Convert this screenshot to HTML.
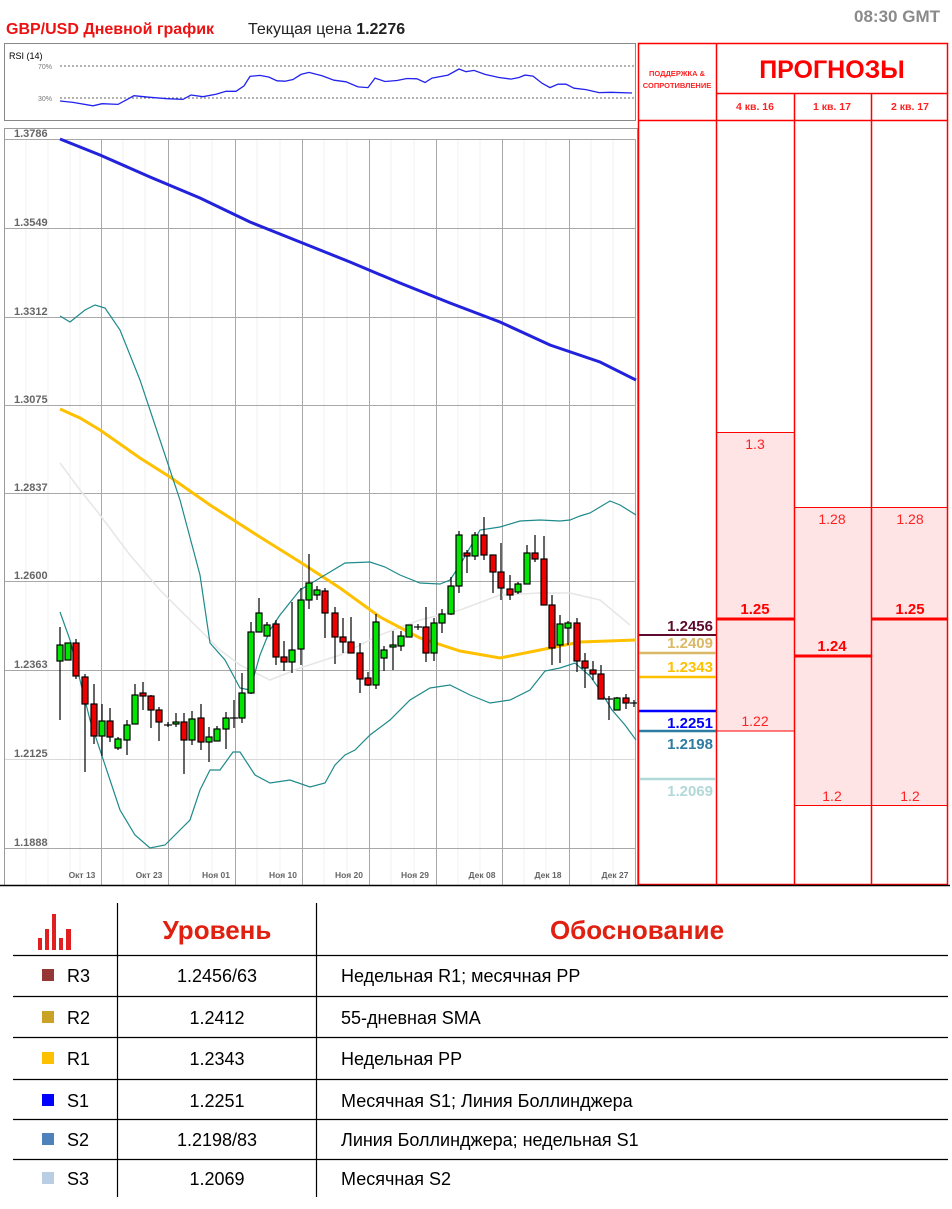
<!DOCTYPE html>
<html><head><meta charset="utf-8"><style>
html,body{margin:0;padding:0;background:#fff;width:952px;height:1209px;overflow:hidden}
svg{display:block;font-family:"Liberation Sans","DejaVu Sans",sans-serif}
</style></head><body>
<svg width="952" height="1209" viewBox="0 0 952 1209" xmlns="http://www.w3.org/2000/svg">
<!-- header -->
<text x="6" y="34" font-size="16" font-weight="bold" fill="#ee1111">GBP/USD Дневной график</text>
<text x="248" y="34" font-size="16" fill="#222">Текущая цена <tspan font-weight="bold">1.2276</tspan></text>
<text x="940" y="22" font-size="17" font-weight="bold" fill="#8a8a8a" text-anchor="end">08:30 GMT</text>

<!-- RSI -->
<rect x="4.5" y="43.5" width="631" height="77" fill="#fff" stroke="#888"/>
<text x="9" y="59" font-size="9" fill="#000">RSI (14)</text>
<text x="52" y="69" font-size="7" fill="#777" text-anchor="end">70%</text>
<text x="52" y="101" font-size="7" fill="#777" text-anchor="end">30%</text>
<line x1="60" y1="66" x2="634" y2="66" stroke="#666" stroke-dasharray="2,2"/>
<line x1="60" y1="98" x2="634" y2="98" stroke="#666" stroke-dasharray="2,2"/>
<polyline fill="none" stroke="#2222ee" stroke-width="1.3" points="60,101 73,102.4 93,105.8 102,103.7 118,104.4 134,95.7 150,97.3 167,98.7 183,99.4 191,95 203,96.7 216,94.3 226,91.3 236,91.3 244,85.9 250,76.4 260,75.4 269,77.1 277,80.8 285,81.2 293,79.5 301,74.4 309,72.4 322,75.8 334,80.2 346,81.8 358,86.9 368,87.6 375,78.1 385,81.5 397,80.5 407,78.5 417,78.8 425,82.5 432,78.1 448,75.1 459,69 466,71.7 474,70.4 485,74.4 499,77.5 511,79.1 519,77.5 525,75.1 533,76.1 542,83.2 550,87.6 558,84.2 566,84.2 574,88.2 586,89.6 599,92.6 611,92.3 632,93"/>

<!-- main chart frame -->
<rect x="4.5" y="128.5" width="633" height="757" fill="#fff" stroke="#999"/>
<g stroke="#f0f0f0" stroke-width="1">
<line x1="26" y1="139" x2="26" y2="885"/><line x1="48" y1="139" x2="48" y2="885"/><line x1="70" y1="139" x2="70" y2="885"/><line x1="80" y1="139" x2="80" y2="885"/><line x1="123" y1="139" x2="123" y2="885"/><line x1="145" y1="139" x2="145" y2="885"/><line x1="190" y1="139" x2="190" y2="885"/><line x1="212" y1="139" x2="212" y2="885"/><line x1="257" y1="139" x2="257" y2="885"/><line x1="280" y1="139" x2="280" y2="885"/><line x1="324" y1="139" x2="324" y2="885"/><line x1="347" y1="139" x2="347" y2="885"/><line x1="391" y1="139" x2="391" y2="885"/><line x1="414" y1="139" x2="414" y2="885"/><line x1="458" y1="139" x2="458" y2="885"/><line x1="480" y1="139" x2="480" y2="885"/><line x1="524" y1="139" x2="524" y2="885"/><line x1="546" y1="139" x2="546" y2="885"/><line x1="591" y1="139" x2="591" y2="885"/><line x1="613" y1="139" x2="613" y2="885"/>
</g>
<g stroke="#a8a8a8" stroke-width="1">
<line x1="5" y1="139.5" x2="636" y2="139.5"/><line x1="5" y1="228.5" x2="636" y2="228.5"/><line x1="5" y1="317.5" x2="636" y2="317.5"/><line x1="5" y1="405.5" x2="636" y2="405.5"/><line x1="5" y1="493.5" x2="636" y2="493.5"/><line x1="5" y1="581.5" x2="636" y2="581.5"/><line x1="5" y1="670.5" x2="636" y2="670.5"/><line x1="5" y1="759.5" x2="636" y2="759.5" stroke="#d8d8d8"/><line x1="5" y1="848.5" x2="636" y2="848.5"/>
<line x1="101.5" y1="139" x2="101.5" y2="885"/><line x1="168.5" y1="139" x2="168.5" y2="885"/><line x1="235.5" y1="139" x2="235.5" y2="885"/><line x1="302.5" y1="139" x2="302.5" y2="885"/><line x1="369.5" y1="139" x2="369.5" y2="885"/><line x1="436.5" y1="139" x2="436.5" y2="885"/><line x1="502.5" y1="139" x2="502.5" y2="885"/><line x1="569.5" y1="139" x2="569.5" y2="885"/><line x1="635.5" y1="139" x2="635.5" y2="885"/>
</g>
<g font-size="11" font-weight="bold" fill="#666">
<text x="14" y="137">1.3786</text><text x="14" y="226">1.3549</text><text x="14" y="315">1.3312</text><text x="14" y="403">1.3075</text><text x="14" y="491">1.2837</text><text x="14" y="579">1.2600</text><text x="14" y="668">1.2363</text><text x="14" y="757">1.2125</text><text x="14" y="846">1.1888</text>
</g>
<g font-size="8.5" font-weight="bold" fill="#666" text-anchor="middle">
<text x="82" y="878">Окт 13</text><text x="149" y="878">Окт 23</text><text x="216" y="878">Ноя 01</text><text x="283" y="878">Ноя 10</text><text x="349" y="878">Ноя 20</text><text x="415" y="878">Ноя 29</text><text x="482" y="878">Дек 08</text><text x="548" y="878">Дек 18</text><text x="615" y="878">Дек 27</text>
</g>

<!-- MAs -->
<polyline fill="none" stroke="#e6e6e6" stroke-width="1.5" points="60,463 80,490 100,515 130,555 160,590 200,630 220,650 240,665 270,680 300,668 340,655 380,635 420,620 460,610 500,595 540,593 570,593 600,600 630,625"/>
<polyline fill="none" stroke="#2222dd" stroke-width="3" points="60,139 100,155 150,177 200,198 250,222 300,242 350,262 400,283 450,303 500,322 550,345 600,362 636,380"/>
<polyline fill="none" stroke="#ffc000" stroke-width="3" points="60,409 80,418 100,430 140,458 170,477 210,505 260,537 300,562 340,588 380,617 420,638 460,651 500,658 540,650 580,642 636,640"/>
<polyline fill="none" stroke="#1f8a8a" stroke-width="1.2" points="60,316 70,322 85,310 95,305 105,308 120,330 140,380 160,440 180,500 200,575 210,643 225,660 240,688 250,690 260,655 270,630 280,615 300,590 320,578 345,563 370,562 385,567 400,575 420,583 440,584 450,580 460,565 480,530 500,527 520,521 540,520 560,521 570,520 580,516 590,513 610,501 620,505 636,515"/>
<polyline fill="none" stroke="#1f8a8a" stroke-width="1.2" points="60,612 70,640 80,680 90,720 100,750 110,780 120,810 135,835 150,848 165,845 180,830 190,820 200,790 210,770 220,770 233,752 240,752 255,775 270,783 290,780 310,787 325,783 335,765 345,755 355,750 370,735 390,720 410,700 430,688 450,685 470,695 490,703 510,700 530,690 545,671 560,668 575,663 590,676 600,690 612,710 625,725 636,740"/>

<!-- candles -->
<g stroke="#000" stroke-width="1.2">
<line x1="60" y1="627" x2="60" y2="720"/><rect x="57" y="645" width="6" height="16" fill="#00e600"/>
<line x1="68" y1="643" x2="68" y2="660"/><rect x="65" y="643" width="6" height="17" fill="#00e600"/>
<line x1="76" y1="639" x2="76" y2="679"/><rect x="73" y="643" width="6" height="33" fill="#ee0000"/>
<line x1="85" y1="674" x2="85" y2="772"/><rect x="82" y="677" width="6" height="27" fill="#ee0000"/>
<line x1="94" y1="684" x2="94" y2="744"/><rect x="91" y="704" width="6" height="32" fill="#ee0000"/>
<line x1="102" y1="704" x2="102" y2="756"/><rect x="99" y="721" width="6" height="15" fill="#00e600"/>
<line x1="110" y1="708" x2="110" y2="742"/><rect x="107" y="721" width="6" height="16" fill="#ee0000"/>
<line x1="118" y1="737" x2="118" y2="750"/><rect x="115" y="739" width="6" height="9" fill="#00e600"/>
<line x1="127" y1="720" x2="127" y2="755"/><rect x="124" y="725" width="6" height="15" fill="#00e600"/>
<line x1="135" y1="684" x2="135" y2="724"/><rect x="132" y="695" width="6" height="29" fill="#00e600"/>
<line x1="143" y1="682" x2="143" y2="710"/><rect x="140" y="693" width="6" height="3" fill="#ee0000"/>
<line x1="151" y1="695" x2="151" y2="728"/><rect x="148" y="696" width="6" height="14" fill="#ee0000"/>
<line x1="159" y1="707" x2="159" y2="741"/><rect x="156" y="710" width="6" height="12" fill="#ee0000"/>
<line x1="168" y1="722" x2="168" y2="727"/><line x1="164" y1="725" x2="172" y2="725"/>
<line x1="176" y1="713" x2="176" y2="727"/><rect x="173" y="722" width="6" height="2" fill="#00e600"/>
<line x1="184" y1="713" x2="184" y2="774"/><rect x="181" y="722" width="6" height="18" fill="#ee0000"/>
<line x1="192" y1="711" x2="192" y2="745"/><rect x="189" y="719" width="6" height="21" fill="#00e600"/>
<line x1="201" y1="704" x2="201" y2="750"/><rect x="198" y="718" width="6" height="24" fill="#ee0000"/>
<line x1="209" y1="727" x2="209" y2="762"/><rect x="206" y="737" width="6" height="5" fill="#00e600"/>
<line x1="217" y1="726" x2="217" y2="741"/><rect x="214" y="729" width="6" height="12" fill="#00e600"/>
<line x1="226" y1="712" x2="226" y2="749"/><rect x="223" y="718" width="6" height="11" fill="#00e600"/>
<line x1="234" y1="700" x2="234" y2="728"/><line x1="230" y1="718" x2="238" y2="718"/>
<line x1="242" y1="673" x2="242" y2="723"/><rect x="239" y="693" width="6" height="25" fill="#00e600"/>
<line x1="251" y1="622" x2="251" y2="694"/><rect x="248" y="632" width="6" height="61" fill="#00e600"/>
<line x1="259" y1="598" x2="259" y2="632"/><rect x="256" y="613" width="6" height="19" fill="#00e600"/>
<line x1="267" y1="622" x2="267" y2="636"/><rect x="264" y="625" width="6" height="11" fill="#00e600"/>
<line x1="276" y1="620" x2="276" y2="665"/><rect x="273" y="624" width="6" height="33" fill="#ee0000"/>
<line x1="284" y1="641" x2="284" y2="671"/><rect x="281" y="657" width="6" height="5" fill="#ee0000"/>
<line x1="292" y1="602" x2="292" y2="673"/><rect x="289" y="650" width="6" height="12" fill="#00e600"/>
<line x1="301" y1="588" x2="301" y2="665"/><rect x="298" y="600" width="6" height="49" fill="#00e600"/>
<line x1="309" y1="554" x2="309" y2="609"/><rect x="306" y="583" width="6" height="17" fill="#00e600"/>
<line x1="317" y1="586" x2="317" y2="600"/><rect x="314" y="590" width="6" height="5" fill="#00e600"/>
<line x1="325" y1="588" x2="325" y2="638"/><rect x="322" y="591" width="6" height="22" fill="#ee0000"/>
<line x1="335" y1="607" x2="335" y2="664"/><rect x="332" y="613" width="6" height="24" fill="#ee0000"/>
<line x1="343" y1="618" x2="343" y2="653"/><rect x="340" y="637" width="6" height="5" fill="#ee0000"/>
<line x1="351" y1="617" x2="351" y2="653"/><rect x="348" y="642" width="6" height="11" fill="#ee0000"/>
<line x1="360" y1="643" x2="360" y2="693"/><rect x="357" y="653" width="6" height="26" fill="#ee0000"/>
<line x1="368" y1="672" x2="368" y2="686"/><rect x="365" y="678" width="6" height="7" fill="#ee0000"/>
<line x1="376" y1="614" x2="376" y2="689"/><rect x="373" y="622" width="6" height="63" fill="#00e600"/>
<line x1="384" y1="646" x2="384" y2="671"/><rect x="381" y="650" width="6" height="8" fill="#00e600"/>
<line x1="393" y1="631" x2="393" y2="670"/><rect x="390" y="645" width="6" height="2" fill="#00e600"/>
<line x1="401" y1="631" x2="401" y2="651"/><rect x="398" y="636" width="6" height="10" fill="#00e600"/>
<line x1="409" y1="625" x2="409" y2="637"/><rect x="406" y="625" width="6" height="12" fill="#00e600"/>
<line x1="418" y1="624" x2="418" y2="630"/><line x1="414" y1="627" x2="422" y2="627"/>
<line x1="426" y1="607" x2="426" y2="662"/><rect x="423" y="627" width="6" height="26" fill="#ee0000"/>
<line x1="434" y1="618" x2="434" y2="661"/><rect x="431" y="623" width="6" height="30" fill="#00e600"/>
<line x1="442" y1="609" x2="442" y2="633"/><rect x="439" y="614" width="6" height="9" fill="#00e600"/>
<line x1="451" y1="577" x2="451" y2="615"/><rect x="448" y="586" width="6" height="28" fill="#00e600"/>
<line x1="459" y1="531" x2="459" y2="593"/><rect x="456" y="535" width="6" height="51" fill="#00e600"/>
<line x1="467" y1="550" x2="467" y2="573"/><rect x="464" y="553" width="6" height="3" fill="#ee0000"/>
<line x1="475" y1="532" x2="475" y2="560"/><rect x="472" y="535" width="6" height="21" fill="#00e600"/>
<line x1="484" y1="517" x2="484" y2="560"/><rect x="481" y="535" width="6" height="20" fill="#ee0000"/>
<line x1="493" y1="555" x2="493" y2="593"/><rect x="490" y="555" width="6" height="17" fill="#ee0000"/>
<line x1="501" y1="543" x2="501" y2="600"/><rect x="498" y="572" width="6" height="16" fill="#ee0000"/>
<line x1="510" y1="575" x2="510" y2="600"/><rect x="507" y="589" width="6" height="6" fill="#ee0000"/>
<line x1="518" y1="582" x2="518" y2="594"/><rect x="515" y="584" width="6" height="8" fill="#00e600"/>
<line x1="527" y1="545" x2="527" y2="584"/><rect x="524" y="553" width="6" height="31" fill="#00e600"/>
<line x1="535" y1="535" x2="535" y2="562"/><rect x="532" y="553" width="6" height="6" fill="#ee0000"/>
<line x1="544" y1="536" x2="544" y2="605"/><rect x="541" y="559" width="6" height="46" fill="#ee0000"/>
<line x1="552" y1="595" x2="552" y2="665"/><rect x="549" y="605" width="6" height="43" fill="#ee0000"/>
<line x1="560" y1="615" x2="560" y2="663"/><rect x="557" y="624" width="6" height="21" fill="#00e600"/>
<line x1="568" y1="621" x2="568" y2="645"/><rect x="565" y="623" width="6" height="5" fill="#00e600"/>
<line x1="577" y1="618" x2="577" y2="672"/><rect x="574" y="623" width="6" height="38" fill="#ee0000"/>
<line x1="585" y1="653" x2="585" y2="688"/><rect x="582" y="661" width="6" height="7" fill="#ee0000"/>
<line x1="593" y1="661" x2="593" y2="680"/><rect x="590" y="670" width="6" height="4" fill="#ee0000"/>
<line x1="601" y1="665" x2="601" y2="699"/><rect x="598" y="674" width="6" height="25" fill="#ee0000"/>
<line x1="609" y1="696" x2="609" y2="720"/><line x1="605" y1="699" x2="613" y2="699"/>
<line x1="617" y1="697" x2="617" y2="710"/><rect x="614" y="698" width="6" height="12" fill="#00e600"/>
<line x1="626" y1="694" x2="626" y2="709"/><rect x="623" y="698" width="6" height="5" fill="#ee0000"/>
<line x1="634" y1="700" x2="634" y2="707"/><line x1="630" y1="703" x2="637" y2="703"/>
</g>

<!-- right panel -->
<rect x="717" y="432" width="77" height="299" fill="#ffe4e6"/>
<rect x="795" y="507" width="76" height="298" fill="#ffe4e6"/>
<rect x="872" y="507" width="76" height="298" fill="#ffe4e6"/>
<g stroke="#ff0000" stroke-width="1.5" fill="none">
<rect x="638.5" y="43.5" width="309" height="841"/>
<line x1="716.5" y1="43" x2="716.5" y2="885"/>
<line x1="794.5" y1="93" x2="794.5" y2="885"/>
<line x1="871.5" y1="93" x2="871.5" y2="885"/>
<line x1="716" y1="93.5" x2="948" y2="93.5"/>
<line x1="638" y1="120.5" x2="948" y2="120.5"/>
<line x1="716" y1="432.5" x2="794" y2="432.5" stroke-width="1"/>
<line x1="716" y1="731" x2="794" y2="731" stroke-width="1"/>
<line x1="794" y1="507.5" x2="948" y2="507.5" stroke-width="1"/>
<line x1="794" y1="805.5" x2="948" y2="805.5" stroke-width="1"/>
</g>
<g stroke="#ff0000" stroke-width="3">
<line x1="716" y1="619" x2="794" y2="619"/>
<line x1="794" y1="656" x2="871" y2="656"/>
<line x1="871" y1="619" x2="948" y2="619"/>
</g>
<text x="677" y="76" font-size="7.5" font-weight="bold" fill="#ff2222" text-anchor="middle">ПОДДЕРЖКА &amp;</text>
<text x="677" y="88" font-size="7.5" font-weight="bold" fill="#ff2222" text-anchor="middle">СОПРОТИВЛЕНИЕ</text>
<text x="832" y="78" font-size="25" font-weight="bold" fill="#ff0000" text-anchor="middle">ПРОГНОЗЫ</text>
<g font-size="10.5" font-weight="bold" fill="#ff2222" text-anchor="middle">
<text x="755" y="110">4 кв. 16</text><text x="832" y="110">1 кв. 17</text><text x="910" y="110">2 кв. 17</text>
</g>
<g font-size="14" fill="#ff2222" text-anchor="middle">
<text x="755" y="449">1.3</text><text x="755" y="726">1.22</text>
<text x="832" y="524">1.28</text><text x="832" y="801">1.2</text>
<text x="910" y="524">1.28</text><text x="910" y="801">1.2</text>
</g>
<g font-size="15" font-weight="bold" fill="#ff0000" text-anchor="middle">
<text x="755" y="614">1.25</text><text x="832" y="651">1.24</text><text x="910" y="614">1.25</text>
</g>
<!-- level lines -->
<line x1="639" y1="635" x2="716" y2="635" stroke="#5c0a2e" stroke-width="2"/>
<line x1="639" y1="653" x2="716" y2="653" stroke="#dbb865" stroke-width="2.5"/>
<line x1="639" y1="677" x2="716" y2="677" stroke="#ffc000" stroke-width="2.5"/>
<line x1="639" y1="711" x2="716" y2="711" stroke="#0000ff" stroke-width="2.5"/>
<line x1="639" y1="731" x2="716" y2="731" stroke="#2e7ba3" stroke-width="2.5"/>
<line x1="639" y1="779" x2="716" y2="779" stroke="#b2d8d8" stroke-width="2.5"/>
<g font-size="15" font-weight="bold" text-anchor="end">
<text x="713" y="631" fill="#5c0a2e">1.2456</text>
<text x="713" y="648" fill="#dbb865">1.2409</text>
<text x="713" y="672" fill="#ffc000">1.2343</text>
<text x="713" y="728" fill="#0000ff">1.2251</text>
<text x="713" y="749" fill="#2e7ba3">1.2198</text>
<text x="713" y="796" fill="#b2d8d8">1.2069</text>
</g>
<line x1="0" y1="885.5" x2="950" y2="885.5" stroke="#000" stroke-width="1.5"/>

<!-- table -->
<g fill="#e02020">
<rect x="38" y="938" width="4" height="12"/><rect x="45" y="929" width="4" height="21"/><rect x="52" y="914" width="4" height="36"/><rect x="59" y="938" width="4" height="12"/><rect x="66" y="929" width="5" height="21"/>
</g>
<g stroke="#000" stroke-width="1.2">
<line x1="117.5" y1="903" x2="117.5" y2="1197"/><line x1="316.5" y1="903" x2="316.5" y2="1197"/>
<line x1="13" y1="955.5" x2="948" y2="955.5"/><line x1="13" y1="996.5" x2="948" y2="996.5"/><line x1="13" y1="1037.5" x2="948" y2="1037.5"/><line x1="13" y1="1079.5" x2="948" y2="1079.5"/><line x1="13" y1="1119.5" x2="948" y2="1119.5"/><line x1="13" y1="1159.5" x2="948" y2="1159.5"/>
</g>
<text x="217" y="939" font-size="26" font-weight="bold" fill="#e02010" text-anchor="middle">Уровень</text>
<text x="637" y="939" font-size="26" font-weight="bold" fill="#e02010" text-anchor="middle">Обоснование</text>
<rect x="42" y="969" width="12" height="12" fill="#953735"/>
<rect x="42" y="1011" width="12" height="12" fill="#c9a227"/>
<rect x="42" y="1052" width="12" height="12" fill="#ffc000"/>
<rect x="42" y="1094" width="12" height="12" fill="#0000ff"/>
<rect x="42" y="1133" width="12" height="12" fill="#4f81bd"/>
<rect x="42" y="1172" width="12" height="12" fill="#b9cde5"/>
<g font-size="18" fill="#000">
<text x="67" y="982">R3</text><text x="67" y="1024">R2</text><text x="67" y="1065">R1</text><text x="67" y="1107">S1</text><text x="67" y="1146">S2</text><text x="67" y="1185">S3</text>
<g text-anchor="middle">
<text x="217" y="982">1.2456/63</text><text x="217" y="1024">1.2412</text><text x="217" y="1065">1.2343</text><text x="217" y="1107">1.2251</text><text x="217" y="1146">1.2198/83</text><text x="217" y="1185">1.2069</text>
</g>
<text x="341" y="982">Недельная R1; месячная PP</text>
<text x="341" y="1024">55-дневная SMA</text>
<text x="341" y="1065">Недельная PP</text>
<text x="341" y="1107">Месячная S1; Линия Боллинджера</text>
<text x="341" y="1146">Линия Боллинджера; недельная S1</text>
<text x="341" y="1185">Месячная S2</text>
</g>
</svg>
</body></html>
